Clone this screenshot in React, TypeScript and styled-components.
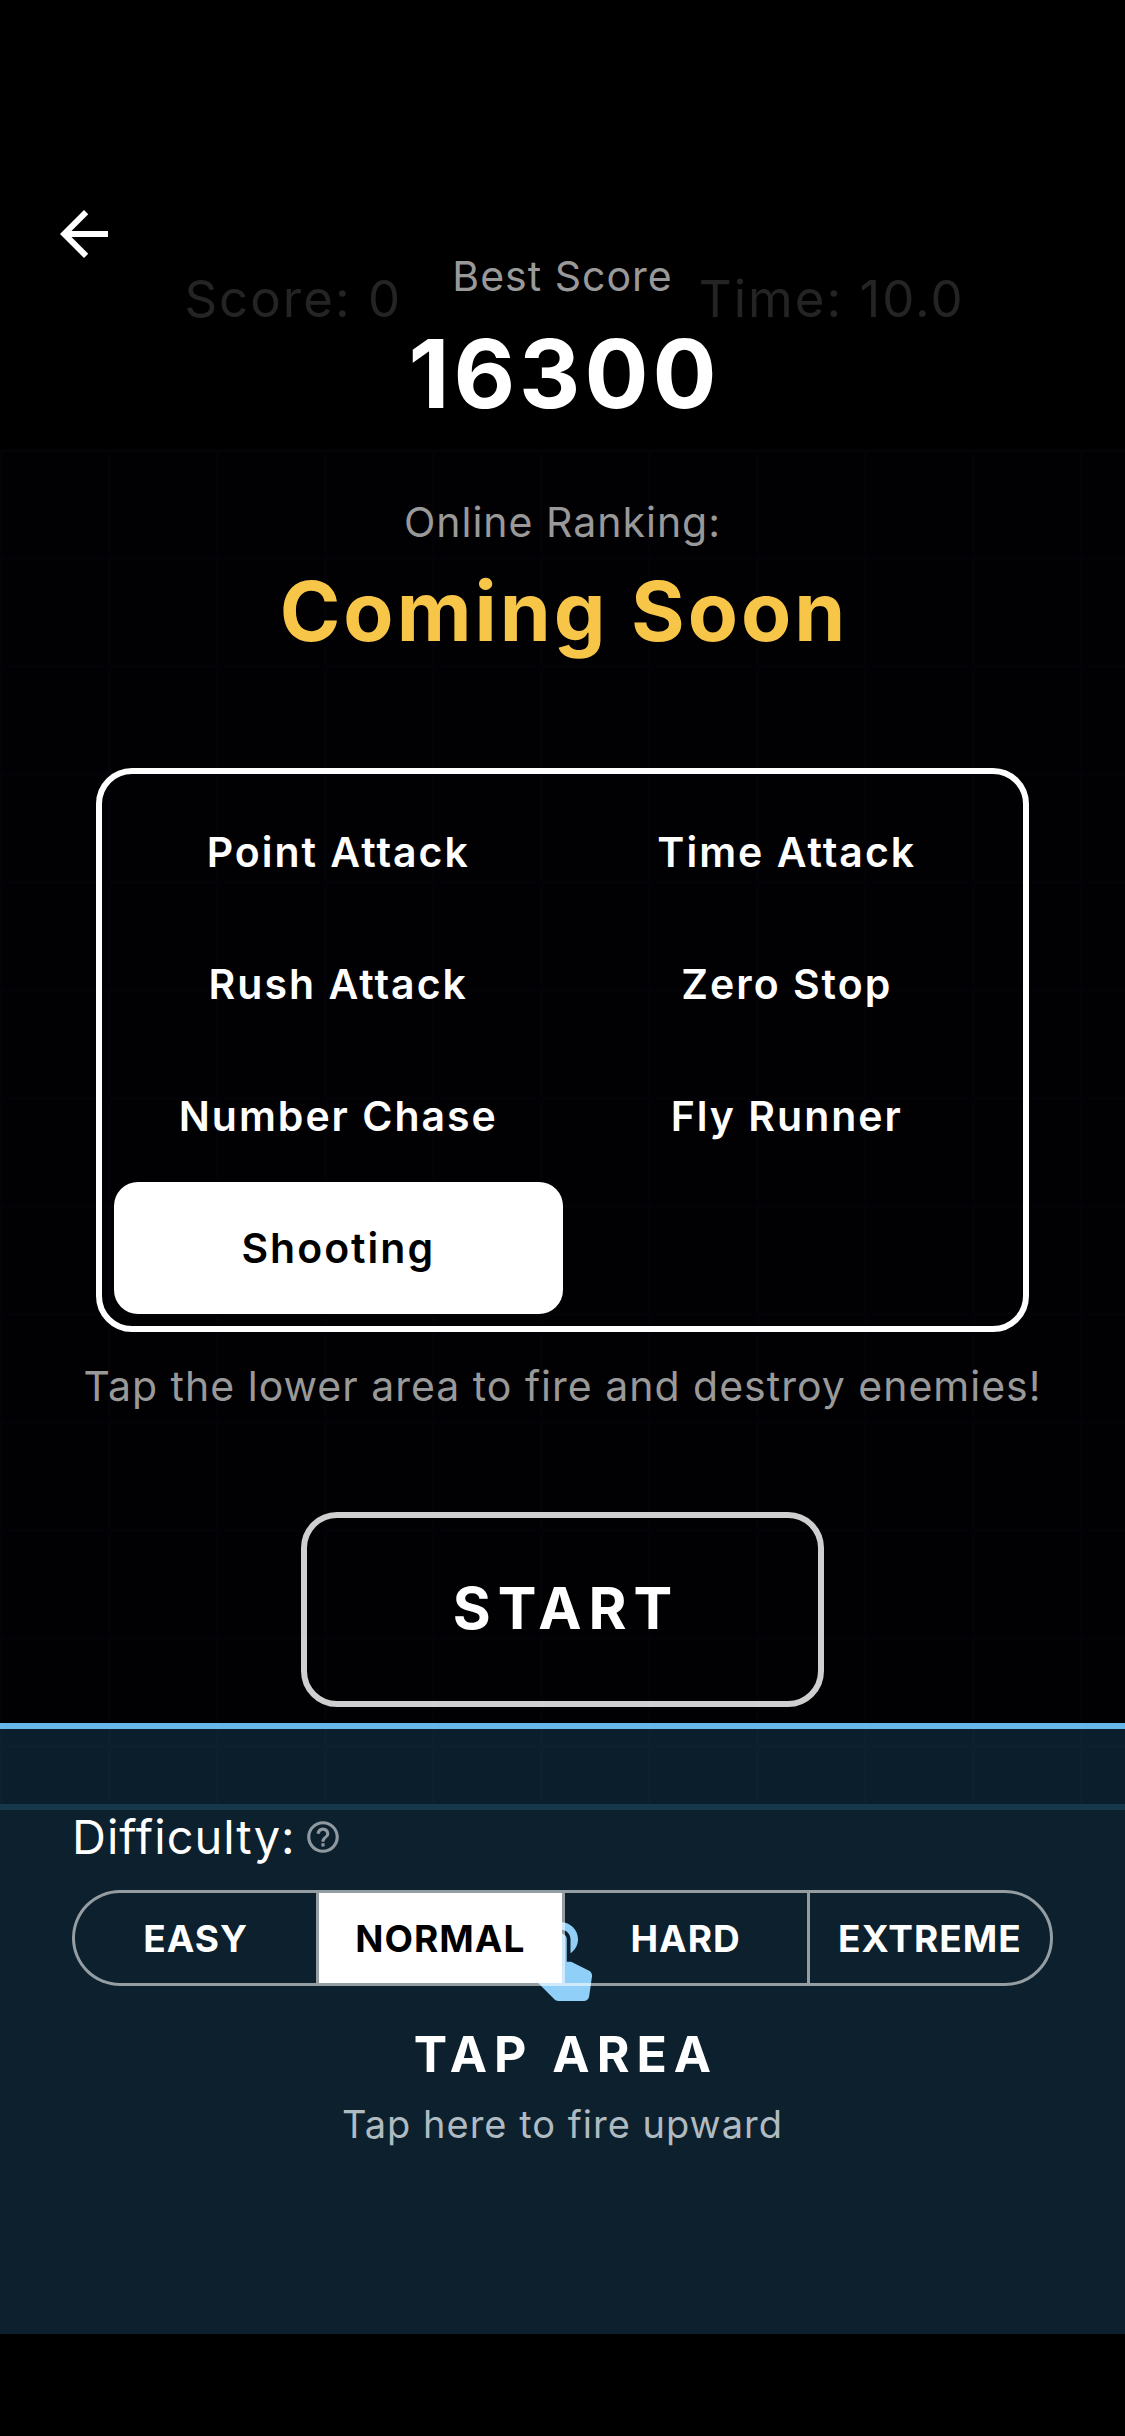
import React, { useState } from "react";
import styled, { createGlobalStyle, css } from "styled-components";

const GlobalStyle = createGlobalStyle`
  *, *::before, *::after { box-sizing: border-box; }
  body {
    margin: 0;
    background: #000;
    color: #fff;
    font-family: Inter, Roboto, "Liberation Sans", sans-serif;
  }
  button { font: inherit; color: inherit; background: none; border: 0; padding: 0; margin: 0; cursor: pointer; }
`;

/* The game and the menu share one grid cell, the menu on top. */
const Screen = styled.div`
  display: grid;
  min-height: 100vh;
  & > * { grid-area: 1 / 1; }
`;

const Game = styled.div`
  display: flex;
  flex-direction: column;
  padding-bottom: 102px;
`;

const Hud = styled.div`
  display: grid;
  grid-template-columns: 1fr 1fr;
  padding: 269px 24px 120px;
  font-size: 51px;
  line-height: 60px;
  letter-spacing: 2px;
  text-align: center;
  color: #242424;
`;

const Field = styled.div`
  flex: 1;
  background:
    repeating-linear-gradient(90deg, #020207 0 3px, transparent 3px 108px),
    repeating-linear-gradient(180deg, #020207 0 3px, transparent 3px 108px),
    #010103;
`;

const TapZone = styled.div`
  display: flex;
  flex-direction: column;
  align-items: center;
  padding: 182px 24px 186px;
  border-top: 6px solid #67b6ea;
  background:
    linear-gradient(#17384a, #17384a) 0 75px / 100% 6px no-repeat,
    repeating-linear-gradient(90deg, #0c202e 0 3px, transparent 3px 108px) 0 0 / 100% 75px no-repeat,
    linear-gradient(#0c202e, #0c202e) 0 16px / 100% 3px no-repeat,
    linear-gradient(#0a1e2b, #0a1e2b) 0 0 / 100% 75px no-repeat,
    #0c202d;
`;

const HandIcon = styled.svg`
  width: 90px;
  height: 90px;
  fill: #90d0f8;
`;

const TapTitle = styled.div`
  margin-top: 23px;
  font-size: 50px;
  font-weight: 700;
  line-height: 60px;
  letter-spacing: 7px;
  text-indent: 7px;
`;

const TapHint = styled.div`
  margin-top: 16px;
  font-size: 38px;
  line-height: 48px;
  letter-spacing: 1px;
  color: #b0bbc1;
`;

const Menu = styled.main`
  display: flex;
  flex-direction: column;
  align-items: center;
  padding-top: 198px;
`;

const Header = styled.header`
  align-self: stretch;
  display: grid;
  grid-template-columns: 72px 1fr 72px;
  align-items: start;
  padding: 0 48px;
`;

const BackButton = styled.button`
  height: 72px;
  svg { display: block; width: 72px; height: 72px; fill: #fff; }
`;

const BestScore = styled.div`
  padding-top: 54px;
  text-align: center;
`;

const Caption = styled.div`
  font-size: 41px;
  line-height: 48px;
  letter-spacing: 1px;
  text-align: center;
  color: #999;
`;

const Figure = styled.div`
  margin-top: 26px;
  font-size: 95px;
  font-weight: 700;
  line-height: 96px;
  letter-spacing: 4px;
  text-indent: 4px;
`;

const Ranking = styled.section`
  margin-top: 76px;
  text-align: center;
`;

const RankingValue = styled.div`
  margin-top: 18px;
  font-size: 82px;
  font-weight: 700;
  line-height: 96px;
  letter-spacing: 3px;
  text-indent: 3px;
  color: #f7c548;
`;

const ModeList = styled.div`
  display: grid;
  grid-template-columns: 1fr 1fr;
  grid-auto-rows: 132px;
  align-self: stretch;
  margin: 108px 96px 30px;
  padding: 12px;
  border: 6px solid #fff;
  border-radius: 36px;
`;

const ModeButton = styled.button<{ $active: boolean }>`
  border-radius: 24px;
  font-size: 41px;
  font-weight: 600;
  letter-spacing: 2px;
  ${(p) => p.$active && css`background: #fff; color: #000;`}
`;

const StartButton = styled.button`
  margin-top: 102px;
  padding: 61px 139px 63px;
  border: 6px solid #cfcfcf;
  border-radius: 36px;
  font-size: 58px;
  font-weight: 700;
  line-height: 59px;
  letter-spacing: 7px;
  text-indent: 7px;
`;

const Difficulty = styled.section`
  align-self: stretch;
  margin: 102px 72px 0;
`;

const DifficultyTitle = styled.div`
  display: flex;
  align-items: center;
  gap: 8px;
  font-size: 47px;
  line-height: 56px;
  letter-spacing: 1px;
`;

const HelpButton = styled.button`
  svg { display: block; width: 38px; height: 38px; fill: #8f999f; }
`;

const Segments = styled.div`
  display: grid;
  grid-template-columns: repeat(4, 1fr);
  margin-top: 25px;
`;

const Segment = styled.button<{ $active: boolean }>`
  height: 96px;
  border: 3px solid rgba(255, 255, 255, 0.56);
  border-right-width: 0;
  font-size: 37px;
  font-weight: 700;
  letter-spacing: 1px;
  background-clip: padding-box;
  &:not(:first-child) { margin-left: -1px; }
  &:not(:last-child) { margin-right: 1px; }
  &:first-child { border-radius: 48px 0 0 48px; }
  &:last-child { border-right-width: 3px; border-radius: 0 48px 48px 0; }
  ${(p) => p.$active && css`background-color: #fff; color: #000;`}
`;

const MODES = ["Point Attack", "Time Attack", "Rush Attack", "Zero Stop", "Number Chase", "Fly Runner", "Shooting"];
const LEVELS = ["EASY", "NORMAL", "HARD", "EXTREME"];

export default function App() {
  const [mode, setMode] = useState("Shooting");
  const [level, setLevel] = useState("NORMAL");

  return (
    <>
      <GlobalStyle />
      <Screen>
        <Game>
          <Hud>
            <span>Score: 0</span>
            <span>Time: 10.0</span>
          </Hud>
          <Field />
          <TapZone>
            <HandIcon viewBox="0 0 24 24" aria-hidden="true">
              <path d="M9 11.24V7.5C9 6.12 10.12 5 11.5 5S14 6.12 14 7.5v3.74c1.21-.81 2-2.18 2-3.74C16 5.01 13.99 3 11.5 3S7 5.01 7 7.5c0 1.56.79 2.93 2 3.74zm9.84 4.63l-4.54-2.26c-.17-.07-.35-.11-.54-.11H13v-6c0-.83-.67-1.5-1.5-1.5S10 6.67 10 7.5v10.74l-3.43-.72c-.08-.01-.15-.03-.24-.03-.31 0-.59.13-.79.33l-.79.8 4.94 4.94c.27.27.65.44 1.06.44h6.79c.75 0 1.33-.55 1.44-1.28l.75-5.27c.01-.07.02-.14.02-.2 0-.62-.38-1.16-.91-1.38z" />
            </HandIcon>
            <TapTitle>TAP AREA</TapTitle>
            <TapHint>Tap here to fire upward</TapHint>
          </TapZone>
        </Game>

        <Menu>
          <Header>
            <BackButton type="button" aria-label="Back">
              <svg viewBox="0 0 24 24" aria-hidden="true">
                <path d="M20 11H7.83l5.59-5.59L12 4l-8 8 8 8 1.41-1.41L7.83 13H20v-2z" />
              </svg>
            </BackButton>
            <BestScore>
              <Caption>Best Score</Caption>
              <Figure>16300</Figure>
            </BestScore>
          </Header>

          <Ranking>
            <Caption>Online Ranking:</Caption>
            <RankingValue>Coming Soon</RankingValue>
          </Ranking>

          <ModeList role="group" aria-label="Game mode">
            {MODES.map((name) => (
              <ModeButton key={name} type="button" $active={name === mode} aria-pressed={name === mode} onClick={() => setMode(name)}>
                {name}
              </ModeButton>
            ))}
          </ModeList>
          <Caption>Tap the lower area to fire and destroy enemies!</Caption>

          <StartButton type="button">START</StartButton>

          <Difficulty aria-labelledby="difficulty-title">
            <DifficultyTitle>
              <span id="difficulty-title">Difficulty:</span>
              <HelpButton type="button" aria-label="About difficulty">
                <svg viewBox="0 0 24 24" aria-hidden="true">
                  <path d="M11 18h2v-2h-2v2zm1-16C6.48 2 2 6.48 2 12s4.48 10 10 10 10-4.48 10-10S17.52 2 12 2zm0 18c-4.41 0-8-3.59-8-8s3.59-8 8-8 8 3.59 8 8-3.59 8-8 8zm0-14c-2.21 0-4 1.79-4 4h2c0-1.1.9-2 2-2s2 .9 2 2c0 2-3 1.75-3 5h2c0-2.25 3-2.5 3-5 0-2.21-1.79-4-4-4z" />
                </svg>
              </HelpButton>
            </DifficultyTitle>
            <Segments>
              {LEVELS.map((name) => (
                <Segment key={name} type="button" $active={name === level} aria-pressed={name === level} onClick={() => setLevel(name)}>
                  {name}
                </Segment>
              ))}
            </Segments>
          </Difficulty>
        </Menu>
      </Screen>
    </>
  );
}
